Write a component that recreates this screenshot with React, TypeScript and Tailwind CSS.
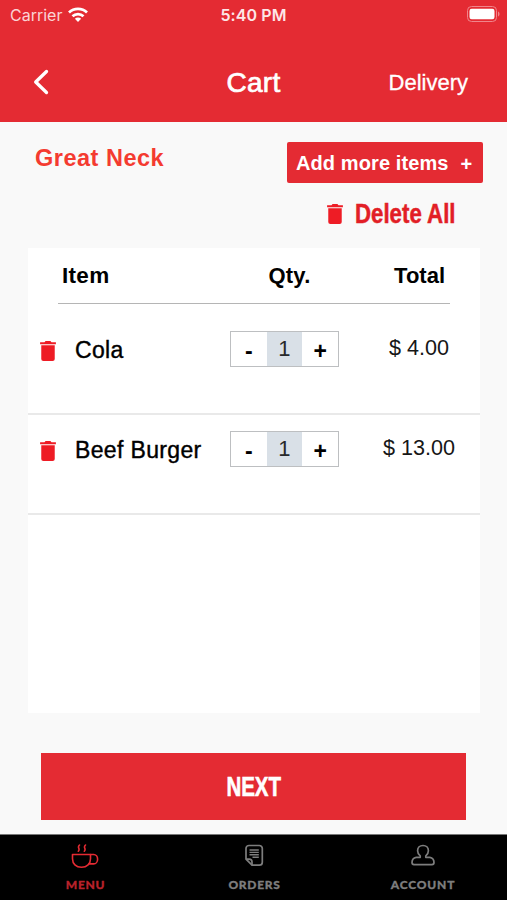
import React from 'react';

interface CartItem {
  name: string;
  qty: number;
  total: string;
}

const items: CartItem[] = [
  { name: 'Cola', qty: 1, total: '$ 4.00' },
  { name: 'Beef Burger', qty: 1, total: '$ 13.00' },
];

const TrashIcon = ({ className }: { className?: string }) => (
  <svg viewBox="0 0 15 19" className={className} fill="#ee1c25">
    <path d="M0 1.2h4.2L5.2 0h4.6l1 1.2H15v1.9H0z" />
    <path d="M1.1 4h12.8v13a2 2 0 0 1-2 2H3.1a2 2 0 0 1-2-2z" />
  </svg>
);

const StatusBar = () => (
  <div className="flex h-[30px] items-center px-[10px] font-['Inter',sans-serif] text-white">
    <div className="flex flex-1 items-center gap-[6px]">
      <span className="text-[16px] leading-[30px] text-[#fbd3d5]">Carrier</span>
      <svg viewBox="0 0 20 15" className="-mt-px h-[15px] w-5" fill="none" stroke="#fff" strokeWidth="2.7">
        <path d="M1 5.5a12.8 12.8 0 0 1 18 0" />
        <path d="M4.5 9.3a7.8 7.8 0 0 1 11 0" />
        <path d="M6.9 11.8a4.4 4.4 0 0 1 6.2 0L10 15z" fill="#fff" stroke="none" />
      </svg>
    </div>
    <span className="text-[16px] font-semibold leading-[30px] tracking-[0.1px] text-[#fde6e7]">5:40 PM</span>
    <div className="flex flex-1 justify-end">
      <svg viewBox="0 0 33 16" className="-mr-[3px] -mt-[2px] h-4 w-[33px]">
        <rect x="0.5" y="0.5" width="29" height="15" rx="4" fill="none" stroke="#f0858b" />
        <rect x="2.5" y="2.7" width="25" height="10.6" rx="2.2" fill="#fff" />
        <path d="M31 5.5v5c1.3-.7 1.5-1.5 1.5-2.5s-.2-1.8-1.5-2.5z" fill="#f0858b" />
      </svg>
    </div>
  </div>
);

const Header = () => (
  <header className="h-[122px] shrink-0 bg-[#e42b33] text-white">
    <StatusBar />
    <div className="flex h-[104px] items-center pl-[33px] pr-[39px]">
      <button className="flex flex-1">
        <svg viewBox="0 0 16 26" className="h-[26px] w-4" fill="none" stroke="#fff" strokeWidth="3.3" strokeLinecap="round" strokeLinejoin="round">
          <path d="M13.5 2.5 2.7 13l10.8 10.5" />
        </svg>
      </button>
      <h1 className="ml-[6px] mt-[2px] text-[28px] font-normal tracking-[0.3px] [-webkit-text-stroke:0.7px_white]">Cart</h1>
      <span className="flex-1 text-right text-[22px] [-webkit-text-stroke:0.3px_white]">Delivery</span>
    </div>
  </header>
);

const QtyStepper = ({ qty }: { qty: number }) => (
  <div className="grid h-9 w-[109px] grid-cols-3 border border-[#bdbfc1] text-center">
    <button className="h-[34px] text-[23px] font-bold leading-[38px]">-</button>
    <span className="h-[34px] bg-[#d9e0e7] text-[22px] leading-[34px] text-[#27292b]">{qty}</span>
    <button className="h-[34px] text-[23px] font-bold leading-[38px]">+</button>
  </div>
);

const CartRow = ({ item }: { item: CartItem }) => (
  <li className="grid h-[100px] grid-cols-[202px_109px_1fr] border-b-2 border-[#e9e9e9] pt-[16px]">
    <div className="flex h-9 items-center pl-3">
      <TrashIcon className="mt-[4px] h-[20px] w-4" />
      <span className="ml-[19px] mt-[2px] whitespace-nowrap text-[23px] tracking-[0.35px] [-webkit-text-stroke:0.4px_black]">{item.name}</span>
    </div>
    <QtyStepper qty={item.qty} />
    <span className="h-9 pl-[19px] text-center text-[21.6px] leading-[34px] text-[#161616]">{item.total}</span>
  </li>
);

const TabBar = () => (
  <nav className="grid h-[66px] shrink-0 grid-cols-3 border-t border-[#777] bg-black text-center font-['Lato',sans-serif] text-[12px] font-black leading-[14px] tracking-[0.7px] text-[#7d7d7d]">
    <div className="flex flex-col items-center pt-[9px] text-[#b9222b]">
      <svg viewBox="0 0 28 26" className="h-[26px] w-7" fill="none" stroke="#e42b33" strokeWidth="1.6" strokeLinecap="round" strokeLinejoin="round">
        <path d="M8.5 1c-3 2.7 1.3 3.5-1.2 6.2M14.5 1c-3 2.7 1.3 3.5-1.2 6.2" />
        <path d="M1.5 10.5h18v4.2c0 5-3.5 8.6-9 8.6s-9-3.6-9-8.6z" />
        <path d="M19.5 10.5h3.2a3.9 4.7 0 0 1 0 9.4h-4.600" />
      </svg>
      <span className="ml-[2px] mt-[8px] [-webkit-text-stroke:0.3px]">MENU</span>
    </div>
    <div className="flex flex-col items-center pt-[9px]">
      <svg viewBox="0 0 20 26" className="h-[26px] w-5" fill="none" stroke="currentColor" strokeWidth="1.7" strokeLinejoin="round">
        <path d="M5 1.500h10.300a3 3 0 0 1 3 3v13.700a3 3 0 0 1-3 3H8L2 15.200V4.500a3 3 0 0 1 3-3z" />
        <path d="M2 15.200h3.200A2.800 2.800 0 0 1 8 18v3.200" />
        <path d="M5.500 6h9.300M5.500 8.400h9.300M5.500 10.800h9.300M8.500 13.200h6.300" strokeWidth="1.4" />
      </svg>
      <span className="ml-[2px] mt-[8px] [-webkit-text-stroke:0.3px]">ORDERS</span>
    </div>
    <div className="flex flex-col items-center pt-[9px]">
      <svg viewBox="0 0 24 26" className="h-[26px] w-6" fill="none" stroke="currentColor" strokeWidth="1.7" strokeLinejoin="round">
        <path d="M9.200 11.800C7.300 10.300 6.600 8.800 6.600 6.700c0-3 2.200-5.200 5.400-5.200s5.400 2.200 5.400 5.200c0 2.100-.7 3.600-2.600 5.100v1.500h4c2.900.4 4.200 2.500 4.200 5.300 0 1.200-.7 2-2 2H3c-1.300 0-2-.8-2-2 0-2.800 1.300-4.900 4.200-5.300h4z" />
      </svg>
      <span className="ml-px mt-[8px] tracking-[0.8px] [-webkit-text-stroke:0.3px]">ACCOUNT</span>
    </div>
  </nav>
);

const App: React.FC = () => {
  return (
    <div className="flex h-[900px] w-[507px] flex-col overflow-hidden bg-[#f9f9f9] font-['Liberation_Sans',sans-serif] text-black">
      <Header />

      <main className="flex flex-1 flex-col">
        {/* Location and cart actions */}
        <div className="flex h-[126px] justify-between pl-[35px] pr-6 pt-5">
          <h2 className="pt-[1px] text-[23.5px] font-bold leading-[30px] tracking-[0.5px] text-[#f43b30]">Great Neck</h2>
          <div className="flex w-[196px] flex-col">
            <button className="flex h-[41px] items-center rounded-[2px] bg-[#e42b33] pl-[9px] text-[20px] font-bold tracking-[0.1px] text-white">
              Add more items
              <span className="ml-[12px] mt-[2px]">+</span>
            </button>
            <button className="flex h-[62px] items-center pl-[40px]">
              <TrashIcon className="h-[20px] w-4" />
              <span className="ml-[12px] origin-left scale-x-[0.83] whitespace-nowrap text-[26.8px] font-bold text-[#e21e26] [-webkit-text-stroke:0.5px]">Delete All</span>
            </button>
          </div>
        </div>

        {/* Order table */}
        <section className="ml-7 h-[465px] w-[452px] bg-white">
          <div className="mx-[30px] grid h-14 grid-cols-[1fr_84px_1fr] border-b border-[#b5b5b5] pl-[4px] pr-[5px] text-[22px] font-bold leading-[56px]">
            <span className="text-[22.5px] tracking-[0.3px]">Item</span>
            <span className="ml-[57px] w-[60px] tracking-[0.2px]">Qty.</span>
            <span className="text-right">Total</span>
          </div>
          <ul className="pt-[11px]">
            {items.map((item) => (
              <CartRow key={item.name} item={item} />
            ))}
          </ul>
        </section>

        <button className="ml-[41px] mt-10 h-[67px] w-[425px] bg-[#e42b33] text-[26.8px] font-bold text-white">
          <span className="mt-[2px] inline-block scale-x-[0.765] [-webkit-text-stroke:0.6px]">NEXT</span>
        </button>
      </main>

      <TabBar />
    </div>
  );
};

export default App;
